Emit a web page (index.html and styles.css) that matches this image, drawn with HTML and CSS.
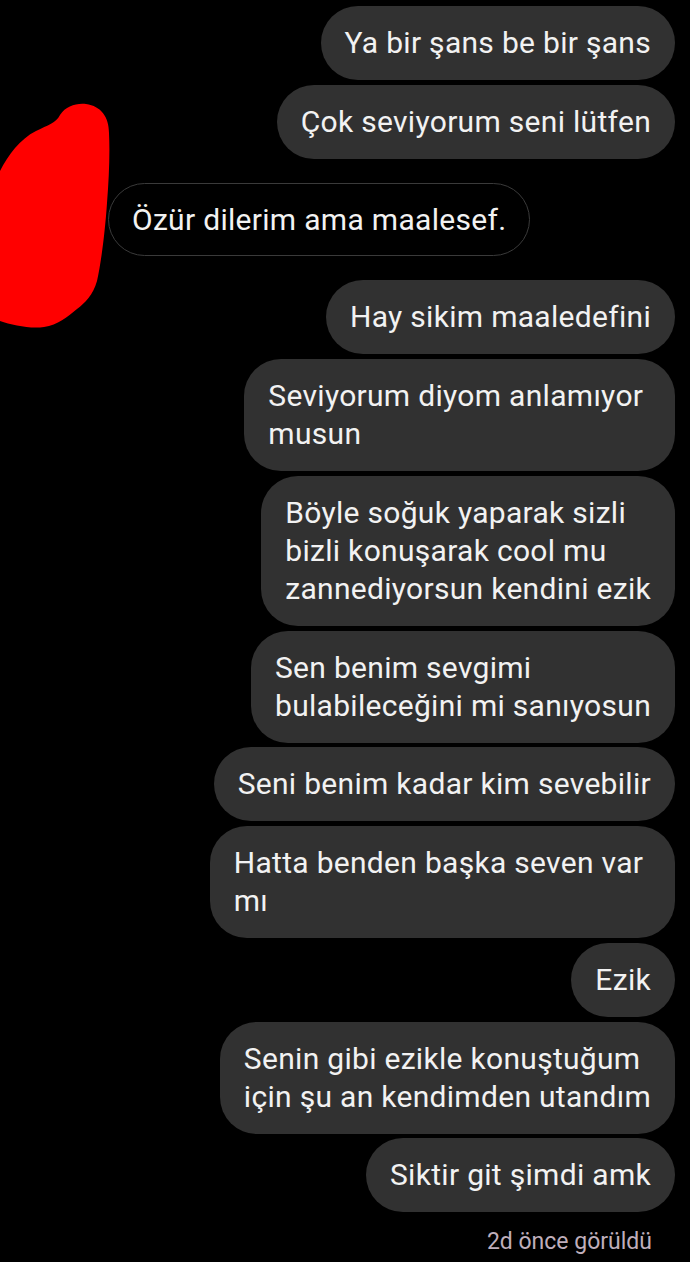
FILE: index.html
```
<!DOCTYPE html>
<html lang="tr">
<head>
    <meta charset="UTF-8">
    <meta name="viewport" content="width=device-width, initial-scale=1.0">
    <title>Mesajlar</title>
    <link rel="stylesheet" href="styles.css">
</head>
<body>
    <div class="chat">
        <div class="msg out">Ya bir şans be bir şans</div>
        <div class="msg out">Çok seviyorum seni lütfen</div>

        <div class="msg in">Özür dilerim ama maalesef.</div>

        <div class="msg out">Hay sikim maaledefini</div>
        <div class="msg out">Seviyorum diyom anlamıyor&nbsp;<br>musun</div>
        <div class="msg out">Böyle soğuk yaparak sizli<br>bizli konuşarak cool mu<br>zannediyorsun kendini ezik</div>
        <div class="msg out">Sen benim sevgimi<br>bulabileceğini mi sanıyosun</div>
        <div class="msg out">Seni benim kadar kim sevebilir</div>
        <div class="msg out">Hatta benden başka seven var&nbsp;<br>mı</div>
        <div class="msg out">Ezik</div>
        <div class="msg out">Senin gibi ezikle konuştuğum<br>için şu an kendimden utandım</div>
        <div class="msg out">Siktir git şimdi amk</div>

        <div class="seen">2d önce görüldü</div>
    </div>

    <!-- scribble over the avatar -->
    <svg class="scribble" width="115" height="230" viewBox="0 0 115 230">
        <path d="M0 68 C8 52 20 36 36 28 C48 22 56 20 60 12 C66 3 76 0 86 1 C101 3 109 14 109 30 C110 50 109 75 107 100 C105 130 101 160 97 178 C93 192 85 200 77 206 C67 214 58 222 44 224 C30 226 12 222 0 218 Z" fill="#ff0000"/>
    </svg>
</body>
</html>
```
FILE: styles.css
```
body {
    margin: 0;
    background-color: #000;
    font-family: Roboto, "Noto Sans", sans-serif;
    color: #f2f2f2;
    position: relative;
    min-height: 1262px;
}
.chat {
    display: flex;
    flex-direction: column;
    align-items: flex-end;
    gap: 4.75px;
    padding: 6px 15px 0 0;
}
.msg {
    font-size: 30px;
    letter-spacing: 0.3px;
    line-height: 38px;
    padding: 18px 24px;
    border-radius: 37px;
    background-color: #313131;
    white-space: nowrap;
}
.msg.in {
    align-self: flex-start;
    margin: 19.5px 0 19.5px 108px;
    padding: 16.5px 23px;
    background-color: transparent;
    border: 1px solid #3a3a3a;
}
.seen {
    font-size: 23px;
    line-height: 26px;
    color: #bfaebb;
    margin: 12px 23px 0 0;
}
.scribble {
    position: absolute;
    left: 0;
    top: 103px;
}
```
